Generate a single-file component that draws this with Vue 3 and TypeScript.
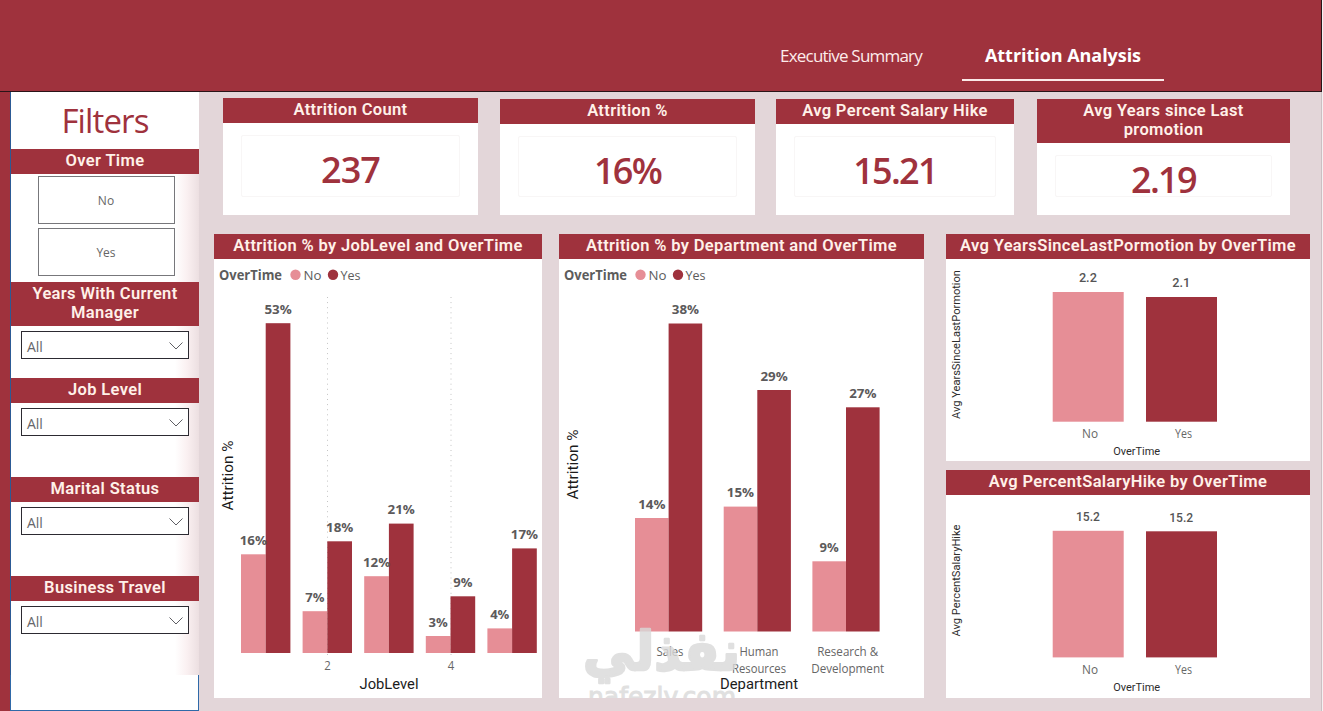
<template>
  <div class="report">
    <header class="top-bar">
      <nav class="tabs">
        <button
          v-for="tab in tabs"
          :key="tab"
          class="tab"
          :class="{ active: tab === activeTab }"
          @click="activeTab = tab"
        >{{ tab }}</button>
      </nav>
    </header>

    <div class="content">
      <aside class="sidebar">
        <h1 class="filters-title">Filters</h1>

        <section class="filter over-time">
          <h3 class="bar-title">Over Time</h3>
          <div class="choices">
            <button v-for="choice in ['No', 'Yes']" :key="choice" class="choice">{{ choice }}</button>
          </div>
        </section>

        <section v-for="filter in filters" :key="filter.title" class="filter" :class="filter.size">
          <h3 class="bar-title">{{ filter.title }}</h3>
          <div class="dropdown">
            <span>All</span>
            <svg class="chevron" viewBox="0 0 14 8">
              <path d="M0.5 0.5 L7 7 L13.5 0.5" />
            </svg>
          </div>
        </section>

        <div class="sidebar-end"></div>
      </aside>

      <main class="main">
        <div class="kpi-row">
          <section v-for="kpi in kpis" :key="kpi.title" class="kpi">
            <h3 class="bar-title">{{ kpi.title }}</h3>
            <div class="kpi-body">
              <div class="kpi-value">{{ kpi.value }}</div>
            </div>
          </section>
        </div>

        <div class="chart-row">
          <section v-for="chart in charts" :key="chart.title" class="card" :class="chart.area">
            <h3 class="bar-title">{{ chart.title }}</h3>
            <svg class="plot" :viewBox="chart.viewBox">
              <g v-if="chart.legendX !== undefined" class="legend">
                <text class="legend-name" :x="chart.legendX" y="280" textLength="63" lengthAdjust="spacingAndGlyphs">OverTime</text>
                <circle class="no" :cx="chart.legendX + 76.5" cy="274.7" r="5.2" />
                <text :x="chart.legendX + 84.5" y="280" textLength="18" lengthAdjust="spacingAndGlyphs">No</text>
                <circle class="yes" :cx="chart.legendX + 114" cy="274.7" r="5.2" />
                <text :x="chart.legendX + 121.5" y="280" textLength="20" lengthAdjust="spacingAndGlyphs">Yes</text>
              </g>
              <line v-for="x in chart.gridX" :key="x" class="grid-line" :x1="x" :x2="x" y1="297" y2="655" />

              <rect
                v-for="bar in chart.bars"
                :key="bar.x"
                :class="bar.series"
                :x="bar.x"
                :y="bar.top"
                :width="chart.barWidth"
                :height="chart.base - bar.top"
              />
              <text
                v-for="bar in chart.bars"
                :key="bar.x"
                :class="chart.small ? 'value-small' : 'value'"
                :x="bar.x + chart.barWidth / 2 + (chart.small ? -0.3 : 0)"
                :y="bar.top - (chart.small ? 9.7 : 9.5)"
                :textLength="bar.label.length * (chart.small ? 6 : 9.1) + (bar.label.length === 2 ? 1 : 0)"
                lengthAdjust="spacingAndGlyphs"
              >{{ bar.label }}</text>

              <text
                v-for="tick in chart.ticks"
                :key="tick.text + tick.x"
                class="tick"
                :x="tick.x"
                :y="tick.y"
                :textLength="tick.w"
                lengthAdjust="spacingAndGlyphs"
              >{{ tick.text }}</text>

              <g v-if="chart.area === 'department'" class="watermark">
                <text class="mark-ar" x="661.5" y="670" textLength="157" lengthAdjust="spacingAndGlyphs">نفذلي</text>
                <text class="mark-en" x="662" y="706" textLength="148" lengthAdjust="spacingAndGlyphs">nafezly.com</text>
              </g>

              <text
                class="axis"
                :class="{ small: chart.small }"
                :x="chart.xTitle.x"
                :y="chart.xTitle.y"
                :textLength="chart.xTitle.w"
                lengthAdjust="spacingAndGlyphs"
              >{{ chart.xTitle.text }}</text>
              <text
                class="axis"
                :class="{ small: chart.small }"
                :transform="`translate(${chart.yTitle.x} ${chart.yTitle.y}) rotate(-90)`"
                :textLength="chart.yTitle.w"
                lengthAdjust="spacingAndGlyphs"
              >{{ chart.yTitle.text }}</text>
            </svg>
          </section>
        </div>
      </main>
    </div>
  </div>
</template>

<script setup lang="ts">
import { ref } from 'vue'

interface Label {
  text: string
  x: number
  y: number
  w: number
}

interface Bar {
  series: 'no' | 'yes'
  label: string
  x: number
  top: number
}

interface Chart {
  title: string
  area: string
  viewBox: string
  base: number
  barWidth: number
  small?: boolean
  legendX?: number
  gridX: number[]
  bars: Bar[]
  ticks: Label[]
  xTitle: Label
  yTitle: Label
}

const tabs = ['Executive Summary', 'Attrition Analysis']
const activeTab = ref('Attrition Analysis')

const filters = [
  { title: 'Years With Current Manager', size: 'short' },
  { title: 'Job Level', size: 'tall' },
  { title: 'Marital Status', size: 'tall' },
  { title: 'Business Travel', size: 'tall' }
]

const kpis = [
  { title: 'Attrition Count', value: '237' },
  { title: 'Attrition %', value: '16%' },
  { title: 'Avg Percent Salary Hike', value: '15.21' },
  { title: 'Avg Years since Last promotion', value: '2.19' }
]

// each pair is [label, top] for No and then Yes
type Pair = [string, number, string, number]

const makeBars = (start: number, step: number, offset: number, pairs: Pair[]): Bar[] =>
  pairs.flatMap(([noLabel, noTop, yesLabel, yesTop], i) => [
    { series: 'no' as const, label: noLabel, x: start + i * step, top: noTop },
    { series: 'yes' as const, label: yesLabel, x: start + i * step + offset, top: yesTop }
  ])

const charts: Chart[] = [
  {
    title: 'Attrition % by JobLevel and OverTime',
    area: 'job-level',
    viewBox: '214 259 328 439',
    base: 653,
    barWidth: 24.7,
    legendX: 219,
    gridX: [327.5, 451],
    bars: makeBars(241, 61.6, 24.7, [
      ['16%', 554.3, '53%', 323.2],
      ['7%', 611.2, '18%', 541.3],
      ['12%', 576.2, '21%', 523.6],
      ['3%', 636, '9%', 596.3],
      ['4%', 628.4, '17%', 548.4]
    ]),
    ticks: [
      { text: '2', x: 327.5, y: 670, w: 6.5 },
      { text: '4', x: 451, y: 670, w: 6.5 }
    ],
    xTitle: { text: 'JobLevel', x: 389, y: 689, w: 59 },
    yTitle: { text: 'Attrition %', x: 233, y: 475.5, w: 70 }
  },
  {
    title: 'Attrition % by Department and OverTime',
    area: 'department',
    viewBox: '559 259 365 439',
    base: 631.5,
    barWidth: 33.6,
    legendX: 564,
    gridX: [],
    bars: makeBars(635, 88.7, 33.6, [
      ['14%', 518, '38%', 323.5],
      ['15%', 506.6, '29%', 390],
      ['9%', 561.3, '27%', 407.3]
    ]),
    ticks: [
      { text: 'Sales', x: 670, y: 656, w: 27 },
      { text: 'Human', x: 759, y: 656, w: 39 },
      { text: 'Resources', x: 759, y: 673, w: 54 },
      { text: 'Research &', x: 847.7, y: 656, w: 61 },
      { text: 'Development', x: 847.7, y: 673, w: 73 }
    ],
    xTitle: { text: 'Department', x: 759, y: 689, w: 78 },
    yTitle: { text: 'Attrition %', x: 578, y: 464.5, w: 70 }
  },
  {
    title: 'Avg YearsSinceLastPormotion by OverTime',
    area: 'promotion',
    viewBox: '946 259 364 202',
    base: 421.7,
    barWidth: 71,
    small: true,
    gridX: [],
    bars: makeBars(1052.7, 93.3, 93.3, [['2.2', 292, '2.1', 297]]),
    ticks: [
      { text: 'No', x: 1090, y: 438, w: 16 },
      { text: 'Yes', x: 1183.5, y: 438, w: 17 }
    ],
    xTitle: { text: 'OverTime', x: 1136.7, y: 455, w: 47 },
    yTitle: { text: 'Avg YearsSinceLastPormotion', x: 960, y: 344.5, w: 149 }
  },
  {
    title: 'Avg PercentSalaryHike by OverTime',
    area: 'salary',
    viewBox: '946 495 364 203',
    base: 657.4,
    barWidth: 71,
    small: true,
    gridX: [],
    bars: makeBars(1052.7, 93.3, 93.3, [['15.2', 530.8, '15.2', 531.3]]),
    ticks: [
      { text: 'No', x: 1090, y: 674, w: 16 },
      { text: 'Yes', x: 1183.5, y: 674, w: 17 }
    ],
    xTitle: { text: 'OverTime', x: 1136.7, y: 691, w: 47 },
    yTitle: { text: 'Avg PercentSalaryHike', x: 960, y: 580.5, w: 112 }
  }
]
</script>

<style>
body {
  margin: 0;
  background-color: #f4f1f2;
}
</style>

<style scoped>
.report {
  width: 1323px;
  height: 711px;
  overflow: hidden;
  display: flex;
  flex-direction: column;
  font-family: "Open Sans", "Noto Sans", sans-serif;
}

.top-bar {
  box-sizing: border-box;
  width: 1322px;
  height: 92px;
  padding-left: 740px;
  background-color: #9f323d;
  border-right: 1px solid #2a1418;
  border-bottom: 1px solid #2a1418;
}

.tabs {
  display: flex;
}

.tab {
  box-sizing: border-box;
  width: 222px;
  height: 81px;
  padding: 30px 0 0;
  border: none;
  background: none;
  font-family: inherit;
  font-size: 17px;
  letter-spacing: -0.8px;
  color: #fdeceb;
  cursor: pointer;
}

.tab.active {
  width: 202px;
  border-bottom: 2px solid #fbe9e8;
  font-size: 18px;
  font-weight: 700;
  letter-spacing: -0.05px;
  color: #fff;
}

.content {
  flex: 1;
  display: flex;
  width: 1321px;
  min-height: 0;
  background-color: #e3d6d9;
  border-right: 1px solid #cbbfc2;
}

.bar-title {
  box-sizing: border-box;
  margin: 0;
  min-height: 25px;
  padding: 2px 10px 4px;
  background-color: #9f323d;
  color: #fff1e9;
  font-family: Roboto, sans-serif;
  font-size: 16.5px;
  font-weight: 600;
  line-height: 19px;
  letter-spacing: 0.35px;
  text-align: center;
}

/* filters */
.sidebar {
  box-sizing: border-box;
  width: 199px;
  border-left: 10px solid #9f323d;
  display: flex;
  flex-direction: column;
  background: linear-gradient(to right, #2c5a95 1px, #fff 1px);
}

.filters-title {
  margin: 0 0 0 1px;
  height: 57px;
  font-size: 33px;
  font-weight: 400;
  line-height: 58px;
  letter-spacing: -0.85px;
  text-align: center;
  color: #9f323d;
}

.filter {
  margin-left: 1px;
  background: linear-gradient(to right, #fff 164px, #faf0f1 176px, #ecdfe1 188px);
}

.filter.over-time {
  height: 133px;
}

.filter.short {
  height: 96px;
}

.filter.tall {
  height: 99px;
}

.choices {
  display: flex;
  flex-direction: column;
  align-items: center;
  gap: 4px;
  padding: 2px 0 0 2px;
}

.choice {
  box-sizing: border-box;
  width: 137px;
  height: 48px;
  border: 1px solid #77777b;
  background-color: #fff;
  font-family: inherit;
  font-size: 12px;
  color: #666;
}

.dropdown {
  box-sizing: border-box;
  width: 168px;
  height: 28px;
  margin: 5px 0 0 10px;
  padding: 3px 5px 0;
  border: 1px solid #2c2a31;
  background-color: #fff;
  display: flex;
  align-items: center;
  justify-content: space-between;
  font-size: 14px;
  letter-spacing: -0.1px;
  color: #66666a;
}

.chevron {
  width: 14px;
  height: 8px;
  margin-bottom: 2px;
}

.chevron path {
  fill: none;
  stroke: #5f5f64;
  stroke-width: 1;
}

.sidebar-end {
  flex: 1;
  border: 1px solid #2f69a8;
  border-top: none;
  background-color: #fff;
}

/* cards */
.main {
  flex: 1;
}

.kpi-row {
  display: flex;
  align-items: flex-end;
  height: 123px;
  padding-left: 24px;
}

.kpi {
  display: flex;
  flex-direction: column;
  width: 255px;
  height: 116px;
  margin-right: 22px;
  background-color: #fff;
}

.kpi:nth-child(1) {
  height: 117px;
}

.kpi:nth-child(2) {
  margin-right: 21px;
}

.kpi:nth-child(3) {
  width: 238px;
  margin-right: 23px;
}

.kpi:nth-child(4) {
  width: 253px;
}

.kpi-body {
  flex: 1;
  padding: 12px 18px 18px;
  display: flex;
}

.kpi-value {
  flex: 1;
  display: flex;
  align-items: center;
  justify-content: center;
  padding-top: 8px;
  border: 1px solid #f8f6f6;
  border-radius: 2px;
  font-size: 36px;
  font-weight: 600;
  line-height: 30px;
  letter-spacing: -1.7px;
  color: #9f323d;
}

.kpi:nth-child(1) .kpi-value {
  letter-spacing: -0.9px;
}

.chart-row {
  display: grid;
  grid-template-columns: 328px 365px 364px;
  grid-template-rows: 227px 228px;
  grid-template-areas:
    "job-level department promotion"
    "job-level department salary";
  column-gap: 17px;
  row-gap: 9px;
  padding: 19px 0 0 15px;
}

.card {
  display: flex;
  flex-direction: column;
  background-color: #fff;
  min-height: 0;
}

.job-level {
  grid-area: job-level;
}

.department {
  grid-area: department;
}

.promotion {
  grid-area: promotion;
  margin: 0 -5px 0 5px;
}

.salary {
  grid-area: salary;
  margin: 0 -5px 0 5px;
}

.plot {
  display: block;
  width: 100%;
  flex: 1;
  min-height: 0;
}

.plot text {
  text-anchor: middle;
}

.no {
  fill: #e68e96;
}

.yes {
  fill: #9f323d;
}

.plot .legend text {
  text-anchor: start;
  font-size: 13.5px;
  fill: #5c5c5c;
}

.plot .legend .legend-name {
  font-weight: 700;
}

.grid-line {
  stroke: #c4c4c4;
  stroke-width: 1;
  stroke-dasharray: 1 4.1;
}

.value {
  font-size: 13.2px;
  font-weight: 700;
  fill: #5c5a5b;
}

.value-small {
  font-family: Roboto, sans-serif;
  font-size: 13px;
  font-weight: 500;
  fill: #555;
}

.tick {
  font-size: 12.2px;
  fill: #666;
}

.axis {
  font-family: Roboto, sans-serif;
  font-size: 14.5px;
  font-weight: 400;
  fill: #1c1c1c;
}

.axis.small {
  font-size: 11px;
  fill: #2c2c2c;
}

.watermark {
  opacity: 0.8;
}

.watermark text {
  fill: #d9d9d9;
  font-family: "DejaVu Sans", sans-serif;
  font-weight: 700;
}

.watermark .mark-ar {
  font-size: 54px;
  stroke: #d9d9d9;
  stroke-width: 2.5;
  stroke-linejoin: round;
}

.watermark .mark-en {
  font-size: 26px;
  font-weight: 400;
  stroke: #d9d9d9;
  stroke-width: 1;
}
</style>
